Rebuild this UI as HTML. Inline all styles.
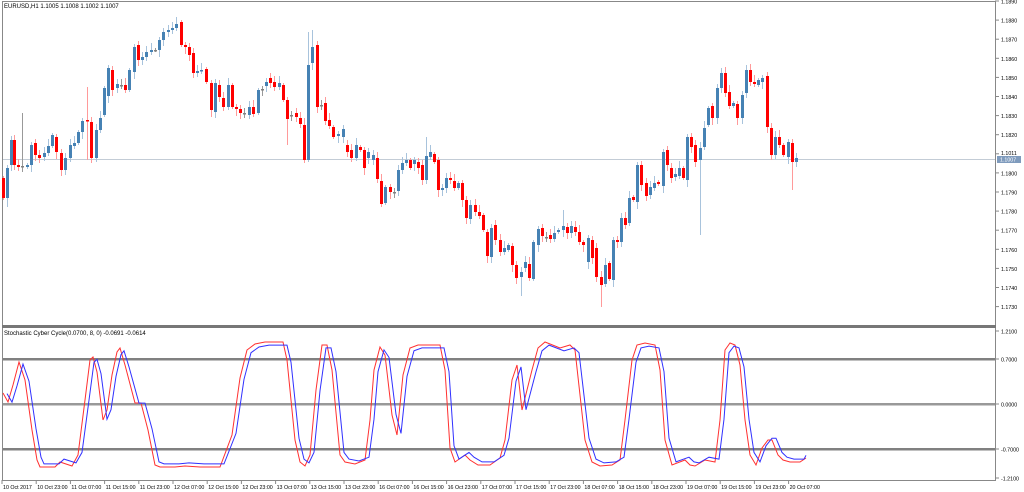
<!DOCTYPE html>
<html><head><meta charset="utf-8"><style>
html,body{margin:0;padding:0;background:#fff;width:1024px;height:492px;overflow:hidden}
svg{display:block}
text{font-family:"Liberation Sans",sans-serif;font-size:6px;fill:#000}
text.t{font-size:5.3px}
</style></head><body>
<svg id="s" width="1024" height="492" xmlns="http://www.w3.org/2000/svg">
<rect x="0" y="0" width="1024" height="492" fill="#fff"/>
<text x="4" y="8">EURUSD,H1  1.1005 1.1008 1.1002 1.1007</text>
<text x="4" y="335">Stochastic Cyber Cycle(0.0700, 8, 0) -0.0691 -0.0614</text>
</svg>
<script>
(function(){
var S=document.getElementById('s'),NS='http://www.w3.org/2000/svg';
function el(t,a,txt){var e=document.createElementNS(NS,t);for(var k in a)e.setAttribute(k,a[k]);if(txt)e.textContent=txt;S.appendChild(e);return e;}
el('line',{x1:2.5,y1:1,x2:2.5,y2:481,stroke:'#888'});
el('line',{x1:2,y1:1.5,x2:996,y2:1.5,stroke:'#888'});
el('line',{x1:995.5,y1:1,x2:995.5,y2:481,stroke:'#888'});
el('line',{x1:2,y1:480.5,x2:996,y2:480.5,stroke:'#888'});
el('rect',{x:2,y:325,width:994,height:3,fill:'#777'});
var P=['1.1890','1.1880','1.1870','1.1860','1.1850','1.1840','1.1830','1.1820','1.1810','1.1800','1.1790','1.1780','1.1770','1.1760','1.1750','1.1740','1.1730'];
for(var i=0;i<P.length;i++){var y=1+i*19.1;el('line',{x1:995,y1:y,x2:999,y2:y,stroke:'#888'});if(i!=8)el('text',{x:1001,y:y+2.5,'class':'t'},P[i]);}
el('text',{x:1001,y:155,'class':'t'},'1.1011');
el('rect',{x:997,y:156,width:24,height:7,fill:'#7f9bbd'});
el('text',{x:1000,y:161.5,'class':'t',style:'fill:#fff'},'1.1007');
el('line',{x1:3,y1:159.5,x2:995,y2:159.5,stroke:'#c3ccd6'});
[[331,'1.2100'],[359,'0.7000'],[404,'0.0000'],[449,'-0.7000'],[478,'-1.2100']].forEach(function(a,i){
 if(i>0&&i<4){el('rect',{x:3,y:a[0]-1,width:992,height:2.5,fill:i==2?'#999':'#808080'});}
 el('line',{x1:995,y1:a[0],x2:999,y2:a[0],stroke:'#888'});
 el('text',{x:1001,y:a[0]+2.5,'class':'t'},a[1]);});
var T=['10 Oct 2017','10 Oct 23:00','11 Oct 07:00','11 Oct 15:00','11 Oct 23:00','12 Oct 07:00','12 Oct 15:00','12 Oct 23:00','13 Oct 07:00','13 Oct 15:00','13 Oct 23:00','16 Oct 07:00','16 Oct 15:00','16 Oct 23:00','17 Oct 07:00','17 Oct 15:00','17 Oct 23:00','18 Oct 07:00','18 Oct 15:00','18 Oct 23:00','19 Oct 07:00','19 Oct 15:00','19 Oct 23:00','20 Oct 07:00'];
for(i=0;i<T.length;i++){var x=2+i*34.2;el('line',{x1:x,y1:480,x2:x,y2:484,stroke:'#888'});el('text',{x:x+1,y:489,'class':'t'},T[i]);}
var C=[[3,178,198],[7,198,168,0,207],[11,165,140],[14,140,165],[18,165,167],[22,166,166,113,172],[27,167,165],[31,165,145],[35,143,155],[39,155,158],[44,157,153],[48,153,146],[52,146,135],[56,137,152],[61,153,170],[65,170,158],[70,158,145],[74,146,143],[78,143,132],[82,132,121],[87,120,121,87,160],[91,122,158],[96,158,130],[100,130,118],[104,115,88],[108,96,68],[112,70,90],[117,88,84],[121,85,85],[125,85,90],[129,90,70],[134,72,47],[138,45,60],[142,60,57],[146,57,52],[151,52,50],[155,50,50],[159,50,40],[163,40,32],[168,32,30],[172,30,28],[176,28,24],[181,22,45],[185,45,47],[189,47,55],[193,53,73],[197,73,71],[201,71,70],[206,69,82],[211,83,110],[215,112,83],[219,85,97],[223,98,107],[228,107,85],[232,85,107],[236,107,109],[240,109,113],[244,113,113],[249,115,107],[253,107,114],[258,113,90],[262,89,89],[266,86,82],[270,78,83],[274,82,87],[279,87,83],[283,85,100],[287,100,119,0,145],[291,115,115],[296,113,117],[300,118,124],[304,125,160],[308,160,65,32],[312,63,47,30],[317,45,107],[321,105,105],[325,103,121],[329,120,126],[333,127,137],[338,136,134],[343,137,129],[347,145,152],[351,150,158],[356,158,145],[360,147,150],[364,150,168],[368,158,152],[373,160,155],[377,158,179],[381,181,204],[385,203,187],[390,187,192],[394,192,192],[398,191,170],[402,170,163],[406,163,160],[410,160,168],[414,164,160],[418,162,168],[422,165,180],[426,180,156,137],[430,157,152],[434,154,162],[438,160,190],[442,190,188],[446,188,178],[450,178,180],[454,181,188],[458,188,183],[462,183,200],[466,200,218],[470,219,205],[475,205,212],[479,212,216],[483,215,230],[487,232,256],[491,257,228],[495,225,240],[500,240,252],[504,252,248],[508,250,245],[512,246,265],[516,265,278],[521,277,272,0,296],[525,268,262],[529,264,278],[533,279,242],[538,245,229],[542,228,236],[546,237,237],[550,235,239],[554,239,233],[558,232,230],[563,230,226,210],[567,227,233],[571,233,226],[575,227,232],[579,232,242],[583,242,245,0,252],[588,262,238],[592,240,258],[596,248,277],[601,277,285,0,307],[605,284,265],[609,263,279],[613,280,240],[617,240,242],[621,242,218],[625,218,225],[629,223,198],[633,197,200],[637,202,165],[641,165,185],[646,183,196],[650,195,187],[654,188,183],[658,182,184],[663,186,152],[667,150,165],[671,168,178],[675,177,174],[679,176,168],[683,168,178],[687,180,137],[691,137,147],[695,145,162],[700,160,148,0,235],[704,147,128],[708,125,108],[712,106,118],[717,118,88],[721,88,73],[725,73,93],[729,92,106],[733,106,103],[737,104,118],[742,118,95],[746,93,70],[750,70,82],[754,82,84],[758,85,80],[762,82,78],[767,76,127],[771,128,155],[775,155,137],[779,137,145],[783,145,155],[788,157,142],[792,143,162,0,190],[796,162,158]];
for(i=0;i<C.length;i++){var c=C[i],cx=c[0],o=c[1],cl=c[2],tp=Math.min(o,cl),bt=Math.max(o,cl);
 var up=cl<o,eq=Math.abs(o-cl)<1;
 var col=eq?'#808080':(up?'#4682b4':'#ff0000'),wc=eq?'#999':(up?'#a8c3dc':'#ff9a9a');
 var hi=c[3]||tp-(2+(i*7)%6),lo=c[4]||bt+(2+(i*5)%6);
 el('rect',{x:cx,y:hi,width:1,height:lo-hi,fill:wc});
 el('rect',{x:cx-1,y:tp,width:3,height:Math.max(bt-tp,1.5),fill:col});}
var R=[[3,393],[8,402],[13,385],[19,362],[25,380],[32,430],[37,460],[40,467],[55,467],[60,462],[72,466],[78,455],[85,400],[90,360],[93,357],[97,372],[103,420],[107,410],[112,375],[117,352],[120,348],[125,365],[135,403],[141,403],[148,430],[155,465],[160,467],[175,467],[185,466],[200,467],[220,467],[232,435],[240,378],[247,350],[255,344],[265,342],[283,342],[287,360],[295,440],[300,462],[305,466],[310,455],[316,390],[322,345],[327,345],[332,370],[340,455],[345,462],[355,464],[365,460],[370,420],[374,370],[380,347],[385,355],[392,415],[397,435],[403,375],[410,348],[418,345],[440,345],[445,370],[450,448],[455,462],[465,455],[470,460],[478,465],[490,465],[500,458],[505,440],[512,380],[517,365],[522,410],[527,390],[532,370],[538,348],[545,342],[560,348],[570,345],[575,350],[580,395],[585,440],[592,462],[600,466],[612,465],[620,460],[625,420],[632,360],[637,345],[645,343],[655,345],[660,370],[665,440],[672,465],[685,460],[690,465],[695,466],[705,460],[715,462],[720,420],[725,350],[730,343],[735,345],[740,365],[745,420],[750,455],[756,465],[762,448],[768,440],[772,440],[778,455],[783,460],[790,462],[800,462],[806,458]];
var pr=R.map(function(p){return p[0]+','+p[1]}).join(' ');
var pb=R.map(function(p){return Math.min(p[0]+4,806)+','+(404+(p[1]-404)*0.95).toFixed(1)}).join(' ');
el('polyline',{points:pr,fill:'none',stroke:'#ff3030','stroke-width':1});
el('polyline',{points:pb,fill:'none',stroke:'#3030ff','stroke-width':1});
})();
</script>
</body></html>
